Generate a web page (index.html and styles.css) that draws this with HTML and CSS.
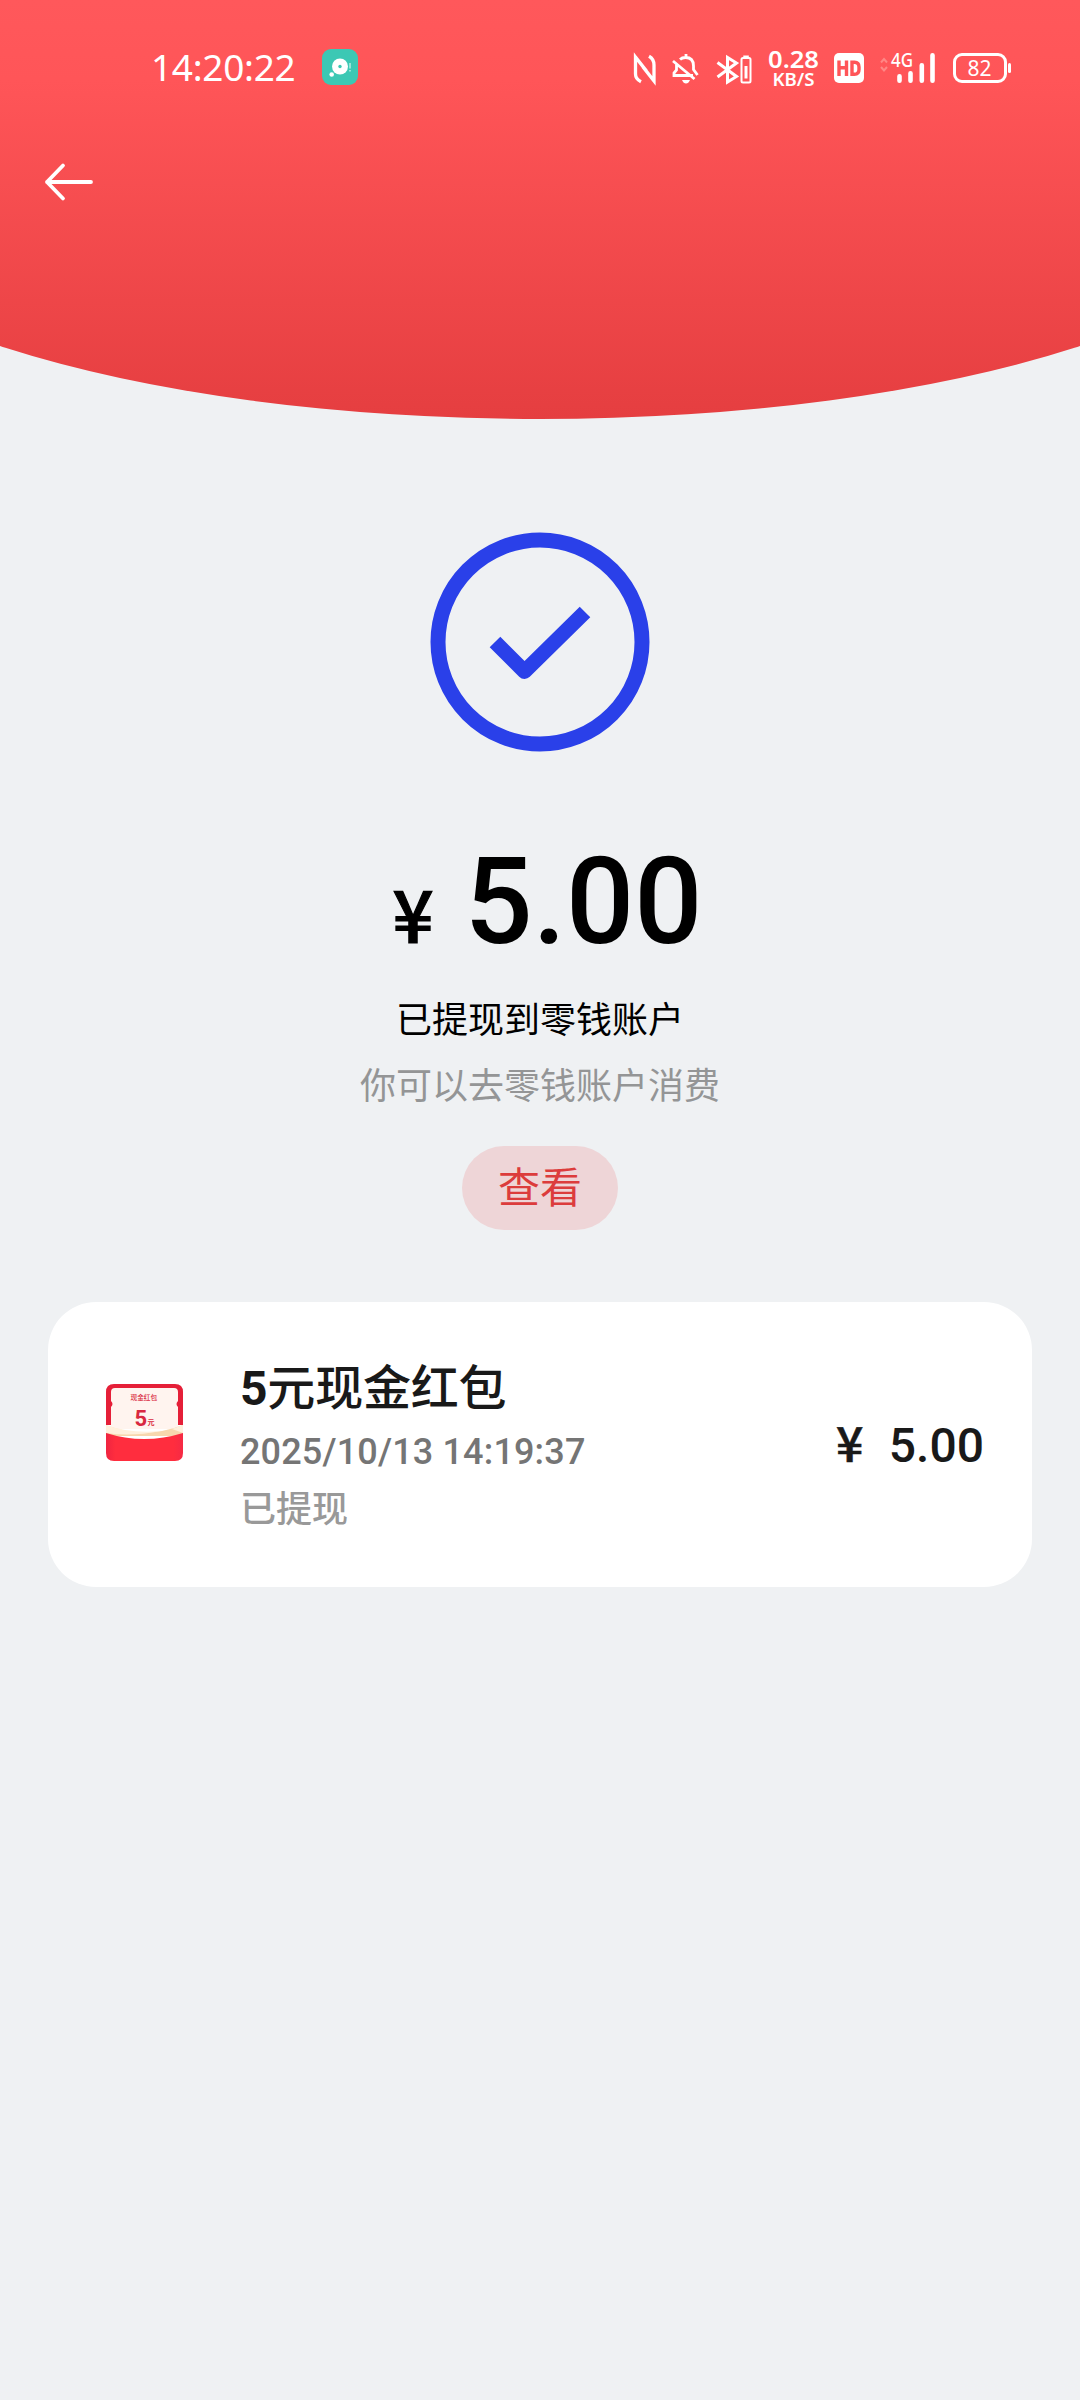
FILE: index.html
```html
<!DOCTYPE html>
<html lang="zh-CN">
<head>
<meta charset="utf-8">
<title>提现</title>
<link rel="stylesheet" href="styles.css">
</head>
<body>
<header class="header">
  <div class="status">
    <span class="clock">14:20:22</span>
    <svg class="app-badge" width="36" height="36" viewBox="0 0 36 36"><rect width="36" height="36" rx="9" fill="#3cc8b4"/><circle cx="18" cy="17.500" r="8" fill="#fff"/><circle cx="18" cy="17.500" r="1.700" fill="#3cc8b4"/><circle cx="9.700" cy="25.500" r="2.300" fill="#fff"/><path d="M28 14v5.500M28 21v1.500" stroke="#b5ebe3" stroke-width="1.500"/></svg>
    <svg class="indicators" width="390" height="50" viewBox="0 0 390 50" fill="none" stroke="#fff" stroke-width="3">
      <path d="M11 36.800Q5.500 34 5.500 29V12L24 36V20Q24 14 19 11.200M5.500 12L16.500 26M13 22L24 36" stroke-width="3.300"/>
      <path d="M43 16L64.500 34M46.500 19.500V25L44 28V30.500H63M50 14.500Q52 12.500 55.500 12.500Q63.500 12.500 63.500 21V24.500L67.500 30M56 9V13" stroke-width="2.800"/><path d="M52 35H60Q58.500 38.500 56 38.500T52 35Z" fill="#fff" stroke="none"/>
      <path d="M87.500 17.500L106.500 31.500L97.500 37V12.500L106.500 18L87.500 32"/>
      <rect x="111.500" y="13" width="9" height="24.500" rx="1.500" stroke-width="2"/><path d="M113.300 11.500h5.500" stroke-width="2"/><path d="M116 21v12.500" stroke-width="3"/>
      <rect x="204" y="8" width="30" height="30" rx="5" fill="#fff" stroke="none"/>
      <g stroke="#ff5558" stroke-width="3.400"><path d="M209 15.500v15.500M216.500 15.500v15.500M209 22.800h7.500M222 17.200h2.500Q229 17.200 229 22v2.500Q229 29.300 224.500 29.300H222Z"/></g>
      <path d="M251 17.500l3-3.500l3 3.500M251 22l3 3.500l3-3.500" stroke="#ff8785" stroke-width="2"/>
      <path d="M269.500 35.700v-4.400M280.500 35.700v-7.400M291.800 35.700V20.300M302.500 35.700V10.300" stroke-width="4.600" stroke-linecap="round"/>
      <rect x="324.500" y="9.500" width="51" height="27" rx="7.500" stroke-width="3"/><path d="M379.500 19.500v7" stroke-width="3" stroke-linecap="round"/>
      <g class="status-text" fill="#fff" stroke="none">
        <text x="138" y="22.500" font-size="24" textLength="51" lengthAdjust="spacingAndGlyphs" font-weight="600">0.28</text>
        <text x="142.500" y="41" font-size="17" textLength="42" lengthAdjust="spacingAndGlyphs" font-weight="600">KB/S</text>
        <text x="261" y="22" font-size="19" textLength="22" lengthAdjust="spacingAndGlyphs" font-weight="500">4G</text>
        <text x="337.500" y="30.500" font-size="21" textLength="24" lengthAdjust="spacingAndGlyphs">82</text>
      </g>
    </svg>
  </div>
  <svg class="back" width="50" height="40" viewBox="0 0 50 40" fill="none" stroke="#fff" stroke-width="3.800" stroke-linecap="round" stroke-linejoin="round"><path d="M47 20H3M19 3.500L3 20L19 36.500"/></svg>
</header>
<main class="result">
  <svg class="success" width="220" height="220" viewBox="0 0 220 220" fill="none" stroke="#2a40e9"><circle cx="110" cy="110" r="102" stroke-width="15"/><path d="M65 110L94.500 139.500L155 80" stroke-width="15" stroke-linejoin="round"/></svg>
  <div class="amount"><span class="amount-yen">¥</span><span class="amount-value">5.00</span></div>
  <p class="message">已提现到零钱账户</p>
  <p class="hint">你可以去零钱账户消费</p>
  <button class="view">查看</button>
</main>
<section class="card">
  <svg class="packet" width="78" height="78" viewBox="0 0 78 78">
    <defs><linearGradient id="red" x2="1"><stop stop-color="#ef2440"/><stop offset=".12" stop-color="#ff2d3e"/><stop offset=".88" stop-color="#ff2d3e"/><stop offset="1" stop-color="#f52a45"/></linearGradient></defs>
    <path d="M0 41V8Q0 0 8 0H69Q77 0 77 8V41Z" fill="#e51f38"/>
    <path d="M5 45V23Q8 20 5 17V8Q5 4 9 4H68Q72 4 72 8V17Q69 20 72 23V45Z" fill="#fff4ef"/>
    <path d="M0 41Q38 56 77 41V52H0Z" fill="#f7d7ae"/>
    <path d="M0 41Q25 50 55 47Q25 53 0 49ZM77 41L66 45L77 49Z" fill="#fff0dc"/>
    <path d="M0 49Q38 61 77 49V69Q77 77 69 77H8Q0 77 0 69Z" fill="url(#red)"/>
    <g fill="#d92840" class="packet-text"><text x="24.500" y="16" font-size="6.700" font-weight="500">现金红包</text><text x="28.500" y="41.500" font-size="22" font-weight="700">5</text><text x="41.500" y="40.500" font-size="7" font-weight="700">元</text></g>
  </svg>
  <div class="detail">
    <h2 class="detail-title"><b>5</b>元现金红包</h2>
    <div class="detail-time">2025/10/13 14:19:37</div>
    <div class="detail-state">已提现</div>
  </div>
  <div class="detail-amount"><span class="detail-yen">¥</span><span>5.00</span></div>
</section>
</body>
</html>
```
FILE: styles.css
```css
* { box-sizing: border-box; }
body {
  margin: 0;
  min-height: 2400px;
  background: #eff1f3;
  font-family: Roboto, "Noto Sans CJK SC", sans-serif;
  color: #000;
}
.header {
  position: relative;
  z-index: 0;
  overflow: hidden;
  height: 419px;
  padding: 42px 0 0 44px;
}
/* Curved backdrop, wider than the screen so that only the middle of the arc shows */
.header::before {
  content: "";
  position: absolute;
  z-index: -1;
  inset: 0 -20%;
  background: linear-gradient(#ff585b 0, #ff5558 80px, #e53e40 100%);
  border-radius: 0 0 50% 50% / 0 0 243px 243px;
}
.status { display: flex; align-items: center; height: 50px; padding-left: 107px; }
.clock {
  width: 171px;
  font: 400 37px/50px "Noto Sans", sans-serif;
  letter-spacing: -.3px;
  color: #fff;
}
.indicators { margin: 6px 0 0 272px; overflow: visible; }
.status-text { font-family: "Noto Sans", sans-serif; }
.back { display: block; margin-top: 70px; }
.result { display: flex; flex-direction: column; align-items: center; padding-top: 113px; }
.success { display: block; }
.amount {
  display: flex;
  align-items: baseline;
  gap: 31px;
  margin-top: 80px;
  padding-left: 15px;
  line-height: 140px;
  font-weight: 500;
}
.amount-yen { font: 500 72px/140px "Noto Sans CJK SC", sans-serif; -webkit-text-stroke: 1.2px currentColor; }
.amount-value { font-size: 120px; }
.message, .hint { margin: 0; font-size: 36px; font-weight: 400; line-height: 52px; }
.message { margin-top: 13px; }
.hint { margin-top: 14px; color: #949596; }
.view {
  width: 156px;
  height: 84px;
  margin-top: 33px;
  padding: 0 0 6px;
  border: 0;
  border-radius: 42px;
  background: #eed5d7;
  font: 400 42px/78px "Noto Sans CJK SC", sans-serif;
  color: #dc3c3c;
}
.card {
  display: flex;
  height: 285px;
  margin: 72px 48px 0;
  padding: 0 48px 0 58px;
  border-radius: 48px;
  background: #fff;
}
.packet { margin-top: 82px; }
.packet-text { font-family: Roboto, "Noto Sans CJK SC", sans-serif; }
.detail { flex: 1; padding: 54px 0 0 56px; }
.detail-title { margin: 0; font-size: 48px; font-weight: 500; line-height: 66px; letter-spacing: -.2px; color: #191919; }
.detail-title b { font-weight: 700; }
.detail-time { margin-top: 3px; font-size: 36px; font-weight: 500; line-height: 54px; letter-spacing: .16px; color: #757575; }
.detail-state { margin-top: 1px; font-size: 36px; font-weight: 500; line-height: 60px; color: #999; }
.detail-amount {
  display: flex;
  align-items: baseline;
  gap: 25.5px;
  padding-top: 106px;
  font-size: 48px;
  font-weight: 500;
  line-height: 66px;
  color: #191919;
}
.detail-yen { font-family: "Noto Sans CJK SC", sans-serif; -webkit-text-stroke: .6px currentColor; }
```
